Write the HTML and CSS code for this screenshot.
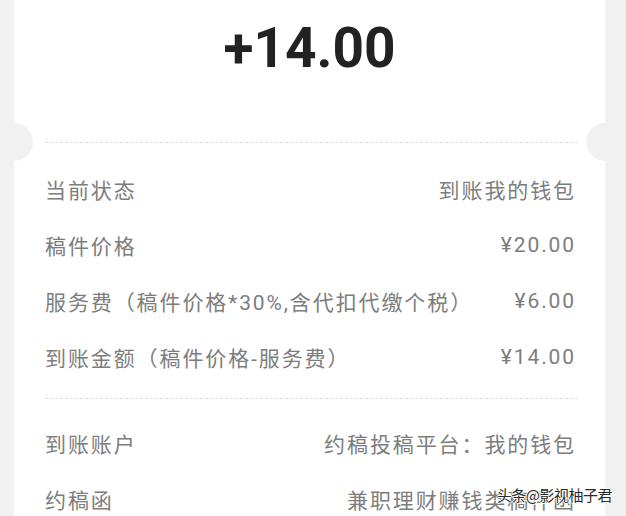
FILE: index.html
```html
<!DOCTYPE html>
<html lang="zh-CN">
<head>
  <meta charset="UTF-8" />
  <meta name="viewport" content="width=device-width, initial-scale=1.0" />
  <title>收入详情</title>
  <link rel="stylesheet" href="styles.css">
</head>
<body>
  <div class="card">
    <div class="amount">+14.00</div>

    <!-- 分割线 + 两侧缺口 -->
    <div class="divider"><span class="notch left"></span><span class="notch right"></span></div>

    <div class="rows first">
      <div class="row"><span>当前状态</span><span>到账我的钱包</span></div>
      <div class="row"><span>稿件价格</span><span>¥20.00</span></div>
      <div class="row"><span>服务费（稿件价格*30%,含代扣代缴个税）</span><span>¥6.00</span></div>
      <div class="row"><span>到账金额（稿件价格-服务费）</span><span>¥14.00</span></div>
    </div>

    <div class="divider"></div>

    <div class="rows second">
      <div class="row"><span>到账账户</span><span>约稿投稿平台：我的钱包</span></div>
      <div class="row"><span>约稿函</span><span>兼职理财赚钱类稿件函</span></div>
    </div>
  </div>

  <div class="watermark">头条@影视柚子君</div>
</body>
</html>
```

FILE: styles.css
```css
body {
  margin: 0;
  background: #f1f1f1;
  font-family: 'Roboto', 'Noto Sans CJK SC', sans-serif;
  height: 516px;
  overflow: hidden;
  position: relative;
}
.card {
  background: #fff;
  margin: 0 21px 0 14px;
  height: 516px;
}
.amount {
  padding: 16px 0 62px;
  line-height: 64px;
  font-size: 55px;
  font-weight: 700;
  color: #222;
  text-align: center;
}
.divider {
  position: relative;
  height: 1px;
  margin: 0 27px 0 31px;
  background: repeating-linear-gradient(90deg, #dcdcdc 0 3px, transparent 3px 5px);
}
/* 半圆缺口 */
.notch {
  position: absolute;
  top: -19px;
  width: 38px;
  height: 38px;
  border-radius: 50%;
  background: #f1f1f1;
}
.notch.left {
  left: -50px;
}
.notch.right {
  right: -46px;
}
.rows.first {
  padding: 18px 0 13px;
}
.rows.second {
  padding-top: 16px;
}
.row {
  display: flex;
  justify-content: space-between;
  align-items: center;
  height: 56px;
  padding: 0 29px 0 31px;
  font-size: 21px;
  letter-spacing: 1.9px;
  color: #7d7d7d;
  white-space: nowrap;
}
.watermark {
  position: absolute;
  right: 14px;
  top: 484px;
  font-family: 'Noto Sans CJK SC', sans-serif;
  font-size: 15px;
  letter-spacing: -0.5px;
  color: #2b2b2b;
  text-shadow: 1px 0 #fff, -1px 0 #fff, 0 1px #fff, 0 -1px #fff;
}
```
